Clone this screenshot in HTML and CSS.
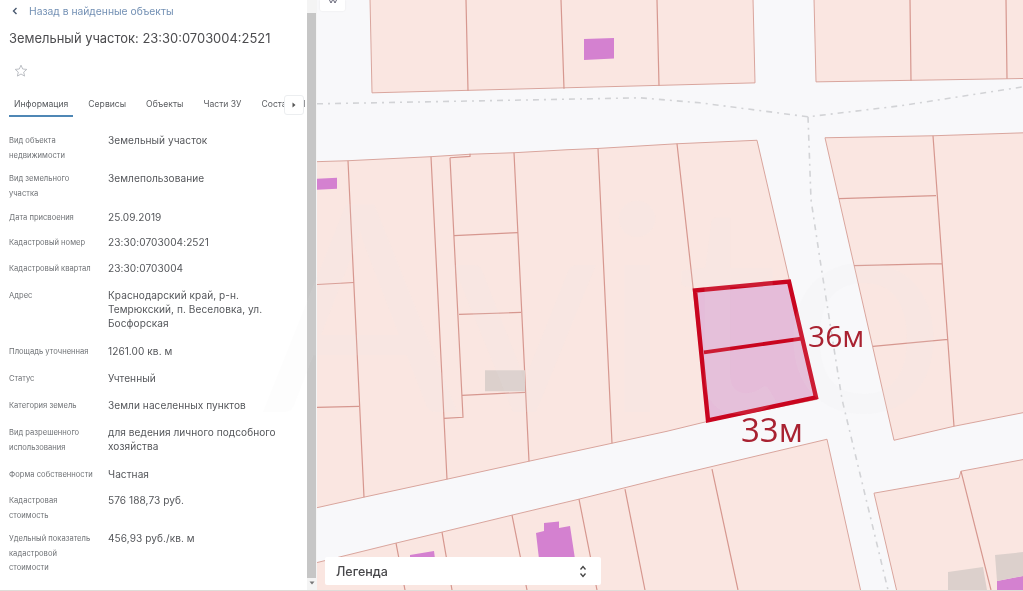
FILE: index.html
```html
<!DOCTYPE html>
<html lang="ru">
<head>
<meta charset="utf-8">
<title>Земельный участок</title>
<link rel="stylesheet" href="styles.css">
</head>
<body>
<div class="page">
  <aside class="panel">
    <a class="back"><svg class="back-icon" viewBox="0 0 6 8" width="6" height="8"><path d="M4.5 1 1.5 4l3 3" fill="none" stroke="#4a5a70" stroke-width="1.4"/></svg><span>Назад в найденные объекты</span></a>
    <h1 class="title">Земельный участок: 23:30:0703004:2521</h1>
    <svg class="star" viewBox="0 0 14 14" width="14" height="14"><path d="M7 1.2 8.7 5l4.1.4-3.1 2.7.9 4L7 10l-3.6 2.1.9-4-3.1-2.7L5.300 5z" fill="none" stroke="#b4b8bd" stroke-width=".9"/></svg>
    <nav class="tabs">
      <span class="tab active">Информация</span>
      <span class="tab">Сервисы</span>
      <span class="tab">Объекты</span>
      <span class="tab">Части ЗУ</span>
      <span class="tab">Состав ЕН</span>
      <span class="tab-next"><svg viewBox="0 0 4 6" width="4" height="6"><path d="M.5.5 3.500 3 .5 5.500z" fill="#555"/></svg></span>
    </nav>
    <dl class="info">
      <dt>Вид объекта недвижимости</dt><dd>Земельный участок</dd>
      <dt>Вид земельного участка</dt><dd>Землепользование</dd>
      <dt>Дата присвоения</dt><dd>25.09.2019</dd>
      <dt>Кадастровый номер</dt><dd>23:30:0703004:2521</dd>
      <dt>Кадастровый квартал</dt><dd>23:30:0703004</dd>
      <dt>Адрес</dt><dd>Краснодарский край, р-н. Темрюкский, п. Веселовка, ул. Босфорская</dd>
      <dt>Площадь уточненная</dt><dd>1261.00 кв. м</dd>
      <dt>Статус</dt><dd>Учтенный</dd>
      <dt>Категория земель</dt><dd>Земли населенных пунктов</dd>
      <dt>Вид разрешенного использования</dt><dd>для ведения личного подсобного хозяйства</dd>
      <dt>Форма собственности</dt><dd>Частная</dd>
      <dt>Кадастровая стоимость</dt><dd>576 188,73 руб.</dd>
      <dt>Удельный показатель кадастровой стоимости</dt><dd>456,93 руб./кв. м</dd>
    </dl>
  </aside>
  <div class="scrollbar"><div class="thumb"></div><svg class="scroll-arrow" viewBox="0 0 6 4" width="6" height="4"><path d="M.5.5h5L3 3.500z" fill="#777"/></svg></div>
  <main class="map">
    <svg class="map-canvas" viewBox="317 0 706 591" preserveAspectRatio="none">
      <g class="parcel">
        <path d="M370 -2 372 93 755 83 753 -2z"/>
        <path d="M814 -2 816 82 1025 78.600 1025 -2z"/>
        <path d="M315 162 348 161 430 157 470 154.500 514 153 567 150 598 148.700 677 144 757 140.500 817 400 708 422 667 432 612 444 529 462 447 480 364 498 315 509z"/>
        <path d="M825 138 933 136 1025 133 1025 413 954 427 894 441z"/>
        <path d="M315 564 396 544 442 533 512 516 579 500 667 478 827 440 861 593 315 593z"/>
        <path d="M874 494 959 479 961 472 1025 460 1025 593 897 593z"/>
      </g>
      <g class="lines">
        <path d="M466 0 468 91M561 0 564 89M657 0 659 86M910 0 911 81M1006 0 1007 79"/>
        <path d="M348 161 364 498M431 157 447 480M450 158 463 418 444 419M450 158 470 156.700 470 154M514 153 529 462M598 148.700 612 444M677 144 708 422"/>
        <path d="M317 285 354 283M317 408 359 407M454 236 518 233M459 315 521 313M462 396 525 393"/>
        <path d="M933 136 954 427M839 199 936 196M854 266 942 264M873 347 948 340"/>
        <path d="M396 544 405 591M442 533 452 591M512 516 527 591M579 500 597 591M625 490 645 591M712 470 738 591M961 472 991 591"/>
      </g>
      <path class="road-axis" d="M317 104 480 101 640 98 700 103 808 117 900 106 1023 87M808 117 811 200 820 260 842 400 888 591"/>
      <g class="building">
        <path d="M584 39 614 38 614 58.500 584 60z"/>
        <path d="M317 179 337 178 337 189 317 190z"/>
        <path d="M536 534 544 532 544 524 559 522.500 559 529 570 527 575 560 539 560z"/>
        <path d="M410 556 434 552 435 560 410 560z"/>
        <path d="M997 582 1023 577 1023 591 997 591z"/>
      </g>
      <g class="shed">
        <path d="M485 371 525 371 525 392 485 392z"/>
        <path d="M948 573 983 568 987 591 948 591z"/>
        <path d="M995 556 1023 553 1023 577 997 582z"/>
      </g>
      <path class="plot" d="M695 291 789 282 816 398 708 421z"/>
      <path class="plot-line" d="M704 353 803 339"/>
    </svg>
    <div class="watermark">Avito</div>
    <span class="dim dim-side">36м</span>
    <span class="dim dim-base">33м</span>
    <div class="map-btn"><svg viewBox="0 0 8 4" width="8" height="4"><path d="M.5 0 2 3 3.500 0M4.500 0 6 3 7.500 0" fill="none" stroke="#667" stroke-width="1"/></svg></div>
    <div class="legend"><span>Легенда</span><svg viewBox="0 0 8 13" width="8" height="13"><path d="M1.500 4.500 4 1.500l2.500 3M1.500 8.500 4 11.500l2.500-3" fill="none" stroke="#444" stroke-width="1.300"/></svg></div>
  </main>
</div>
</body>
</html>
```
FILE: styles.css
```css
* { box-sizing: border-box; }
html, body { margin: 0; height: 100%; background: #fff; }
body { font-family: Inter, "Liberation Sans", sans-serif; overflow: hidden; }

.page {
  position: relative;
  display: flex;
  width: 1023px;
  height: 591px;
  overflow: hidden;
  filter: blur(0.45px);
  border-bottom: 1px solid #dedcd8;
}

.panel { width: 307px; flex: none; background: #fff; padding: 5px 0 0 9px; overflow: hidden; }

.back { display: flex; align-items: center; height: 12px; padding-left: 3px; color: #7390b4; font-size: 10.3px; line-height: 12px; }
.back-icon { margin-right: 11px; }

.title { margin: 13px 0 0; color: #4b4b4e; font-size: 12.950px; font-weight: 400; line-height: 16px; white-space: nowrap; }

.star { display: block; margin: 18px 0 0 5px; }

.tabs { position: relative; display: flex; gap: 20px; height: 33px; margin-top: 12px; margin-right: -2px; padding: 0 0 0 5px; overflow: hidden; }
.tab { flex: none; height: 26px; padding-top: 9px; color: #5b5d61; font-size: 8.600px; line-height: 11px; white-space: nowrap; }
.tab.active { position: relative; color: #55585c; }
.tab.active::after { content: ""; position: absolute; left: -5px; right: -5px; top: 25px; height: 1.500px; background: #4f87b5; }
.tab-next {
  position: absolute; right: 5px; top: 5px;
  display: flex; align-items: center; justify-content: center;
  width: 20px; height: 20px;
  background: #fff; border: 1px solid #eceef0; border-radius: 3px;
}

.info {
  display: grid;
  grid-template-columns: 99px 190px;
  grid-template-rows: 38px 39px 25px 26px 27px 56px 27px 27px 27px 42px 26px 38px auto;
  margin: 11px 0 0;
}
.info dt { padding-right: 11px; color: #6f7276; font-size: 7.600px; line-height: 14.500px; }
.info dd { margin: -1px 0 0; color: #55575b; font-size: 10.100px; line-height: 14px; letter-spacing: .06px; }

.scrollbar { position: relative; width: 10px; flex: none; background: #f4f4f4; }
.thumb { position: absolute; left: 0; right: 1px; top: 13px; height: 565px; background: #c6c6c6; }
.scroll-arrow { position: absolute; left: 2px; bottom: 5px; }

.map { position: relative; flex: 1; background: #f8f8fa; }
.map-canvas { display: block; width: 100%; height: 100%; }

.parcel path { fill: #fae6e1; stroke: #d9a59d; stroke-width: 1; }
.lines path { fill: none; stroke: #d6978f; stroke-width: 1.200; }
.road-axis { fill: none; stroke: #d2d3d6; stroke-width: 1.600; stroke-dasharray: 6 5 2 5; }
.building path { fill: #d481d0; }
.shed path { fill: #dcd0cc; }
.plot { fill: #e5bcd9; stroke: #c9051f; stroke-width: 4.400; }
.plot-line { fill: none; stroke: #c9051f; stroke-width: 3.800; }

.dim { position: absolute; color: #a92231; font-family: "Open Sans", "Liberation Sans", sans-serif; font-size: 30px; line-height: 30px; white-space: nowrap; }
.dim-side { left: 491px; top: 321px; }
.dim-base { left: 424px; top: 415px; font-size: 33px; }

.map-btn { position: absolute; left: 3px; top: 0; display: flex; justify-content: center; width: 25px; height: 11px; background: #fff; border-radius: 0 0 2px 2px; box-shadow: 0 0 2px rgba(0,0,0,.08); }

.legend { position: absolute; left: 8px; top: 557px; display: flex; align-items: center; justify-content: space-between; width: 276px; height: 28px; padding: 0 14px 0 11px; background: #fff; border-radius: 2px; color: #47474a; font-size: 12.500px; font-weight: 500; }

.watermark { position: absolute; left: -55px; top: 150px; color: rgba(240,240,240,.1); font-family: Lato, "Liberation Sans", sans-serif; font-size: 290px; font-weight: 400; line-height: 300px; letter-spacing: 3px; pointer-events: none; }
```
